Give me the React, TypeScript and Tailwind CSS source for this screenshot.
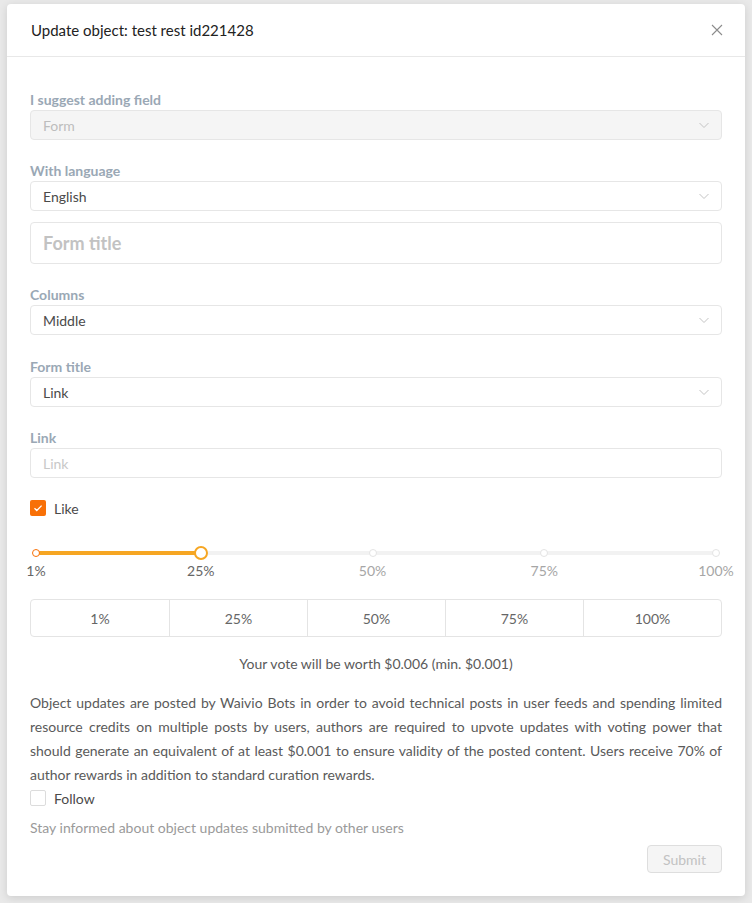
import React from "react";

const FONT = { fontFamily: "Lato, 'Noto Sans', sans-serif" };

const MARKS = [1, 25, 50, 75, 100];
const VALUE = 25;

function pos(v: number) {
  return ((v - 1) / 99) * 100;
}

function Chevron() {
  return (
    <svg className="w-[12px] h-[12px]" viewBox="0 0 12 12" fill="none">
      <path d="M1.5 4l4.5 4.5L10.5 4" stroke="#c4c4c4" strokeWidth="1" />
    </svg>
  );
}

function Label({ children }: { children: React.ReactNode }) {
  return <div className="text-[14px] leading-[21px] font-bold text-[#9aa8b5]">{children}</div>;
}

function Select({ value, disabled }: { value: string; disabled?: boolean }) {
  return (
    <div
      className={
        "h-[30px] flex items-center justify-between pl-[12px] pr-[11px] rounded-[4px] border border-[#e6e6e6] text-[14px] " +
        (disabled ? "bg-[#f5f5f5] text-[#bdbdbd]" : "bg-white text-[#4a4a4a]")
      }
    >
      <span>{value}</span>
      <Chevron />
    </div>
  );
}

function Slider() {
  return (
    <div className="mt-[27px] px-[6px]">
      <div className="relative h-[14px]">
        <div className="absolute left-0 right-0 top-[5px] h-[4px] rounded-full bg-[#f2f2f2]" />
        <div
          className="absolute left-0 top-[5px] h-[4px] rounded-full bg-[#f6a623]"
          style={{ width: `${pos(VALUE)}%` }}
        />
        {MARKS.map((m) => (
          <div
            key={m}
            className={
              "absolute top-[3px] w-[8px] h-[8px] -ml-[4px] rounded-full bg-white border " +
              (m <= VALUE ? "border-[#f87007]" : "border-[#e4e4e4]")
            }
            style={{ left: `${pos(m)}%` }}
          />
        ))}
        <div
          className="absolute top-0 w-[14px] h-[14px] -ml-[7px] rounded-full bg-white border-2 border-[#f6a623]"
          style={{ left: `${pos(VALUE)}%` }}
        />
      </div>
      <div className="relative h-[20px] mt-[1px]">
        {MARKS.map((m) => (
          <span
            key={m}
            className={
              "absolute top-0 -translate-x-1/2 text-[14px] leading-[20px] " +
              (m <= VALUE ? "text-[#666]" : "text-[#a6a6a6]")
            }
            style={{ left: `${pos(m)}%` }}
          >
            {m}%
          </span>
        ))}
      </div>
    </div>
  );
}

export default function App() {
  return (
    <div className="min-h-screen bg-[#e9e9e9] pt-[4px] pl-[7px]" style={FONT}>
      <div className="w-[738px] bg-white rounded-[4px] shadow-[0_2px_8px_rgba(0,0,0,0.12)]">
        {/* Header */}
        <div className="h-[53px] flex items-center justify-between pl-[24px] pr-[22px] border-b border-[#e8e8e8]">
          <div className="text-[15px] text-[#222]">Update object: test rest id221428</div>
          <svg className="w-[12px] h-[12px]" viewBox="0 0 12 12" fill="none">
            <path d="M1 1l10 10M11 1L1 11" stroke="#8c8c8c" strokeWidth="1.1" />
          </svg>
        </div>

        {/* Body */}
        <div className="px-[23px] pt-[32px] pb-[23px] text-[14px] text-[#5a5a5a]">
          <Label>I suggest adding field</Label>
          <Select value="Form" disabled />

          <div className="mt-[20px]">
            <Label>With language</Label>
            <Select value="English" />
          </div>

          <div className="mt-[11px] h-[42px] flex items-center pl-[12px] rounded-[4px] border border-[#e6e6e6] text-[18px] font-bold text-[#c2c2c2]">
            Form title
          </div>

          <div className="mt-[20px]">
            <Label>Columns</Label>
            <Select value="Middle" />
          </div>

          <div className="mt-[21px]">
            <Label>Form title</Label>
            <Select value="Link" />
          </div>

          <div className="mt-[20px]">
            <Label>Link</Label>
            <div className="h-[30px] flex items-center pl-[12px] rounded-[4px] border border-[#e6e6e6] text-[#c8c8c8]">
              Link
            </div>
          </div>

          {/* Like checkbox */}
          <div className="mt-[19px] h-[22px] flex items-center gap-[8px]">
            <span className="w-[16px] h-[16px] rounded-[2px] bg-[#f87007] flex items-center justify-center">
              <svg className="w-[10px] h-[10px]" viewBox="0 0 10 10" fill="none">
                <path d="M1.5 5.2l2.3 2.3L8.6 2.6" stroke="#fff" strokeWidth="1.3" />
              </svg>
            </span>
            <span className="text-[#4a4a4a]">Like</span>
          </div>

          <Slider />

          {/* Preset buttons */}
          <div className="mt-[18px] h-[38px] grid grid-cols-5 rounded-[4px] border border-[#e4e4e4] text-[#666]">
            {MARKS.map((m, i) => (
              <div
                key={m}
                className={"flex items-center justify-center " + (i > 0 ? "border-l border-[#e4e4e4]" : "")}
              >
                {m}%
              </div>
            ))}
          </div>

          <div className="mt-[17px] text-center leading-[20px]">
            Your vote will be worth $0.006 (min. $0.001)
          </div>

          <p className="mt-[17px] leading-[24px] text-justify">
            Object updates are posted by Waivio Bots in order to avoid technical posts in user feeds and spending
            limited resource credits on multiple posts by users, authors are required to upvote updates with voting
            power that should generate an equivalent of at least $0.001 to ensure validity of the posted content.
            Users receive 70% of author rewards in addition to standard curation rewards.
          </p>

          {/* Follow checkbox */}
          <div className="h-[22px] flex items-center gap-[8px]">
            <span className="w-[16px] h-[16px] rounded-[2px] border border-[#dcdcdc] bg-white" />
            <span className="text-[#4a4a4a]">Follow</span>
          </div>

          <div className="mt-[9px] leading-[20px] text-[#9a9a9a]">
            Stay informed about object updates submitted by other users
          </div>

          <div className="mt-[7px] flex justify-end">
            <div className="h-[28px] w-[75px] flex items-center justify-center rounded-[4px] border border-[#dedede] bg-[#f5f5f5] text-[#c2c2c2]">
              Submit
            </div>
          </div>
        </div>
      </div>
    </div>
  );
}
